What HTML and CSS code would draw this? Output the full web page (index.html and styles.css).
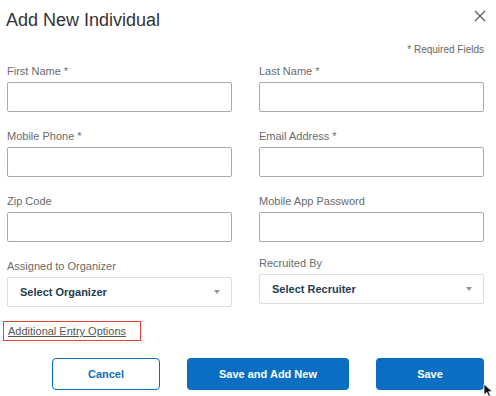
FILE: index.html
```html
<!DOCTYPE html>
<html lang="en">
<head>
    <meta charset="UTF-8">
    <meta name="viewport" content="width=device-width, initial-scale=1.0">
    <title>Add New Individual</title>
    <link rel="stylesheet" href="styles.css">
</head>
<body>
    <div class="modal">
        <div class="modal-header">
            <h1>Add New Individual</h1>
            <button class="close-btn" aria-label="Close">
                <svg width="12" height="12" viewBox="0 0 12 12">
                    <path d="M1 1L11 11M11 1L1 11" stroke="#666a78" stroke-width="1.5" fill="none"/>
                </svg>
            </button>
        </div>
        <div class="required-note">* Required Fields</div>

        <div class="form-grid">
            <div class="field">
                <label>First Name *</label>
                <input type="text">
            </div>
            <div class="field">
                <label>Last Name *</label>
                <input type="text">
            </div>
            <div class="field">
                <label>Mobile Phone *</label>
                <input type="text">
            </div>
            <div class="field">
                <label>Email Address *</label>
                <input type="text">
            </div>
            <div class="field">
                <label>Zip Code</label>
                <input type="text">
            </div>
            <div class="field">
                <label>Mobile App Password</label>
                <input type="password">
            </div>
            <div class="field">
                <label>Assigned to Organizer</label>
                <div class="select-box">
                    <span>Select Organizer</span>
                    <span class="caret"></span>
                </div>
            </div>
            <div class="field field-raised">
                <label>Recruited By</label>
                <div class="select-box">
                    <span>Select Recruiter</span>
                    <span class="caret"></span>
                </div>
            </div>
        </div>

        <div class="extra-options">
            <a href="#">Additional Entry Options</a>
        </div>

        <div class="actions">
            <button class="btn btn-outline">Cancel</button>
            <button class="btn btn-primary btn-wide">Save and Add New</button>
            <button class="btn btn-primary">Save</button>
        </div>

        <svg class="cursor" width="12" height="14" viewBox="0 0 12 14">
            <path d="M1 1L1 12L3.8 9.4L5.8 13.4L7.6 12.5L5.7 8.7L9.5 8.7Z" fill="#111" stroke="#fff" stroke-width="0.8"/>
        </svg>
    </div>
</body>
</html>
```

FILE: styles.css
```css
/* General Styles */
body {
    margin: 0;
    font-family: "Liberation Sans", Arial, sans-serif;
    background: #fff;
    color: #333;
}

.modal {
    position: relative;
    width: 496px;
    height: 396px;
    box-sizing: border-box;
    padding: 9px 12px 0 7px;
    overflow: hidden;
}

/* Header */
.modal-header {
    display: flex;
    justify-content: space-between;
    align-items: flex-start;
}

h1 {
    margin: 0 0 0 -1px;
    font-size: 18px;
    font-weight: normal;
    line-height: 22px;
    color: #333;
}

.close-btn {
    background: none;
    border: none;
    padding: 0;
    margin: 1px -2px 0 0;
    cursor: pointer;
}

.required-note {
    margin-top: 13px;
    text-align: right;
    font-size: 10px;
    line-height: 12px;
    color: #666;
}

/* Form */
.form-grid {
    display: grid;
    grid-template-columns: 225px 225px;
    column-gap: 27px;
    row-gap: 17px;
    margin-top: 8px;
}

.field {
    display: flex;
    flex-direction: column;
}

.field-raised {
    margin-top: -3px;
}

label {
    font-size: 11px;
    line-height: 14px;
    color: #6b6b6b;
    margin-bottom: 4px;
}

input[type="text"], input[type="password"] {
    height: 30px;
    box-sizing: border-box;
    border: 1px solid #aaa;
    border-radius: 2px;
    padding: 0 8px;
    font-size: 12px;
    margin: 0;
}

.select-box {
    height: 30px;
    box-sizing: border-box;
    border: 1px solid #ddd;
    border-radius: 2px;
    padding: 0 11px 0 12px;
    display: flex;
    align-items: center;
    justify-content: space-between;
    font-size: 11px;
    font-weight: bold;
    color: #1d3c52;
}

.caret {
    width: 0;
    height: 0;
    border-left: 3px solid transparent;
    border-right: 3px solid transparent;
    border-top: 4px solid #999;
}

/* Link */
.extra-options {
    margin: 14px 0 0 -4px;
    width: 132px;
    height: 18px;
    border: 1px solid #e2452f;
    padding-left: 4px;
    display: flex;
    align-items: center;
}

.extra-options a {
    font-size: 11px;
    color: #555;
    text-decoration: underline;
}

/* Buttons */
.actions {
    display: flex;
    justify-content: flex-end;
    gap: 27px;
    margin-top: 17px;
}

.btn {
    width: 108px;
    height: 32px;
    box-sizing: border-box;
    border-radius: 4px;
    font-family: "Liberation Sans", Arial, sans-serif;
    font-size: 11px;
    font-weight: bold;
    cursor: pointer;
}

.btn-wide {
    width: 162px;
}

.btn-outline {
    background: #fff;
    color: #0a6fc2;
    border: 1px solid #0a6fc2;
}

.btn-primary {
    background: #0a6fc2;
    color: #fff;
    border: none;
}

.cursor {
    position: absolute;
    left: 483px;
    top: 383px;
}
```
